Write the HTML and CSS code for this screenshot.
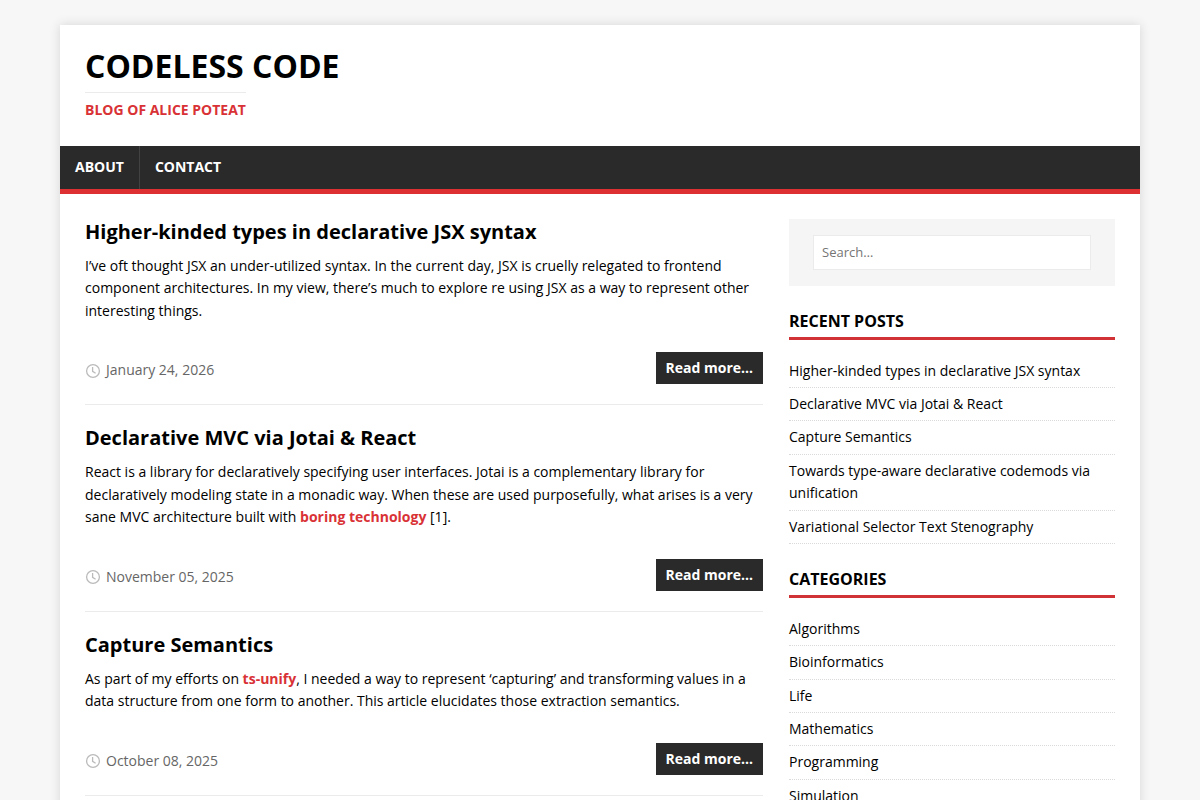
FILE: index.html
```html
<!DOCTYPE html>
<html lang="en">
<head>
<meta charset="utf-8">
<meta name="viewport" content="width=device-width, initial-scale=1">
<title>Codeless Code</title>
<link rel="stylesheet" href="styles.css">
</head>
<body>
<div class="container">
  <header class="header">
    <div class="logo">
      <h1 class="logo-title"><a href="#">Codeless Code</a></h1>
      <p class="logo-tagline">Blog of Alice Poteat</p>
    </div>
  </header>
  <nav class="main-nav">
    <ul class="menu">
      <li class="menu-item"><a href="#">About</a></li>
      <li class="menu-item"><a href="#">Contact</a></li>
    </ul>
  </nav>
  <div class="wrapper">
    <main class="content">
      <article class="post">
        <h2 class="post-title"><a href="#">Higher-kinded types in declarative JSX syntax</a></h2>
        <p class="post-summary">I’ve oft thought JSX an under-utilized syntax. In the current day, JSX is cruelly relegated to frontend component architectures. In my view, there’s much to explore re using JSX as a way to represent other interesting things.</p>
        <footer class="post-footer">
          <div class="meta">
            <svg class="meta-icon" viewBox="0 0 16 16" aria-hidden="true"><circle cx="8" cy="8" r="6.4"/><path d="M7.6 4v4.4l3 1.8"/></svg>
            <time datetime="2026-01-24">January 24, 2026</time>
          </div>
          <a class="btn" href="#">Read more…</a>
        </footer>
      </article>
      <article class="post">
        <h2 class="post-title"><a href="#">Declarative MVC via Jotai &amp; React</a></h2>
        <p class="post-summary">React is a library for declaratively specifying user interfaces. Jotai is a complementary library for declaratively modeling state in a monadic way. When these are used purposefully, what arises is a very sane MVC architecture built with <a href="#">boring technology</a> [1].</p>
        <footer class="post-footer">
          <div class="meta">
            <svg class="meta-icon" viewBox="0 0 16 16" aria-hidden="true"><circle cx="8" cy="8" r="6.4"/><path d="M7.6 4v4.4l3 1.8"/></svg>
            <time datetime="2025-11-05">November 05, 2025</time>
          </div>
          <a class="btn" href="#">Read more…</a>
        </footer>
      </article>
      <article class="post">
        <h2 class="post-title"><a href="#">Capture Semantics</a></h2>
        <p class="post-summary">As part of my efforts on <a href="#">ts-unify</a>, I needed a way to represent ‘capturing’ and transforming values in a data structure from one form to another. This article elucidates those extraction semantics.</p>
        <footer class="post-footer">
          <div class="meta">
            <svg class="meta-icon" viewBox="0 0 16 16" aria-hidden="true"><circle cx="8" cy="8" r="6.4"/><path d="M7.6 4v4.4l3 1.8"/></svg>
            <time datetime="2025-10-08">October 08, 2025</time>
          </div>
          <a class="btn" href="#">Read more…</a>
        </footer>
      </article>
    </main>
    <aside class="sidebar">
      <form class="search" role="search">
        <input class="search-input" type="search" placeholder="Search…" aria-label="Search">
      </form>
      <section class="widget">
        <h4 class="widget-title">Recent Posts</h4>
        <ul class="widget-list">
          <li><a href="#">Higher-kinded types in declarative JSX syntax</a></li>
          <li><a href="#">Declarative MVC via Jotai &amp; React</a></li>
          <li><a href="#">Capture Semantics</a></li>
          <li><a href="#">Towards type-aware declarative codemods via unification</a></li>
          <li><a href="#">Variational Selector Text Stenography</a></li>
        </ul>
      </section>
      <section class="widget">
        <h4 class="widget-title">Categories</h4>
        <ul class="widget-list">
          <li><a href="#">Algorithms</a></li>
          <li><a href="#">Bioinformatics</a></li>
          <li><a href="#">Life</a></li>
          <li><a href="#">Mathematics</a></li>
          <li><a href="#">Programming</a></li>
          <li><a href="#">Simulation</a></li>
        </ul>
      </section>
    </aside>
  </div>
</div>
</body>
</html>
```
FILE: styles.css
```css
*,
*::before,
*::after {
  box-sizing: border-box;
}

html {
  scrollbar-width: none;
}

body {
  margin: 0;
  background: #f7f7f7;
  color: #000;
  font: 14px/1.6 "Open Sans", Arial, sans-serif;
}

a {
  color: inherit;
  text-decoration: none;
}

h1, h2, h4, p, ul {
  margin: 0;
  padding: 0;
}

ul {
  list-style: none;
}

.container {
  width: 90%;
  max-width: 1080px;
  margin: 25px auto;
  background: #fff;
  box-shadow: 0 0 10px rgba(50, 50, 50, .17);
}

.header {
  padding: 25px;
}

.logo {
  display: inline-block;
  font-weight: 700;
  text-transform: uppercase;
}

.logo-title {
  font-size: 32px;
  line-height: 1;
}

.logo-tagline {
  display: inline-block;
  margin-top: 10px;
  padding-top: 6px;
  border-top: 1px solid #ebebeb;
  color: #d93236;
}

.main-nav {
  background: #2a2a2a;
  border-bottom: 5px solid #dd3033;
}

.menu {
  display: flex;
}

.menu-item a {
  display: block;
  padding: 10px 15px;
  color: #fff;
  font-weight: 700;
  text-transform: uppercase;
}

.menu-item + .menu-item {
  border-left: 1px solid #424242;
}

.wrapper {
  display: flex;
  gap: 26px;
  padding: 25px;
}

.content {
  flex: 1;
  min-width: 0;
}

.post {
  margin-bottom: 20px;
  padding-bottom: 20px;
  border-bottom: 1px solid #ebebeb;
}

.post-title {
  margin-bottom: 10px;
  font-size: 20px;
  line-height: 1.3;
}

.post-summary a {
  color: #d93236;
  font-weight: 700;
}

.post-footer {
  display: flex;
  justify-content: space-between;
  align-items: center;
  margin-top: 30px;
}

.meta {
  display: flex;
  align-items: center;
  gap: 5px;
  padding-top: 5px;
  color: #666;
}

.meta-icon {
  width: 16px;
  height: 16px;
  fill: none;
  stroke: #bbb;
  stroke-width: 1.3;
}

.btn {
  padding: 5px 10px;
  background: #2a2a2a;
  color: #fff;
  font-weight: 700;
}

.sidebar {
  width: 326px;
}

.search {
  padding: 16px 24px;
  background: #f5f5f5;
}

.search-input {
  display: block;
  width: 100%;
  height: 35px;
  padding: 8px;
  border: 1px solid #ebebeb;
  border-radius: 0;
  background: #fff;
  font: 13px "Open Sans", Arial, sans-serif;
}

.search-input::placeholder {
  color: #757575;
}

.widget {
  margin-top: 25px;
}

.widget-title {
  margin-bottom: 15px;
  padding-bottom: 5px;
  border-bottom: 3px solid #d03236;
  font-size: 16px;
  line-height: 1.3;
  text-transform: uppercase;
}

.widget-list li {
  padding: 5px 0;
  border-bottom: 1px dotted #dadada;
}
```
